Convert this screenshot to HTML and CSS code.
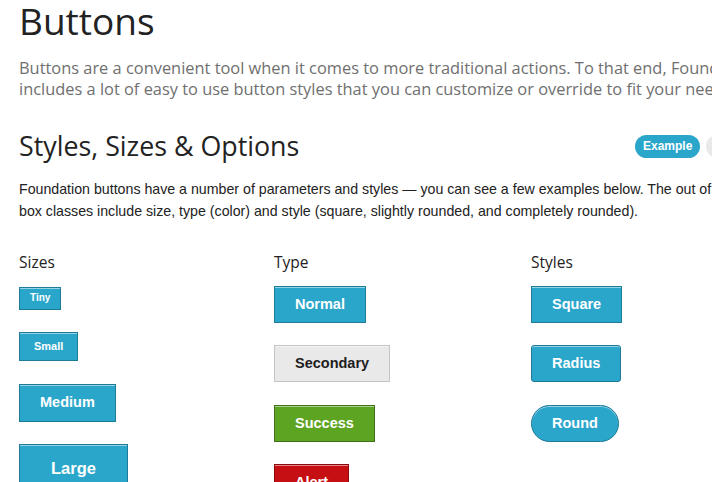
FILE: index.html
```html
<!DOCTYPE html>
<html lang="en">
<head>
<meta charset="utf-8">
<title>Buttons</title>
<link rel="stylesheet" href="styles.css">
</head>
<body>
<div class="page">
  <h1 class="title">Buttons</h1>
  <p class="lead">Buttons are a convenient tool when it comes to more traditional actions. To that end, Foundation<br>includes a lot of easy to use button styles that you can customize or override to fit your needs.</p>

  <div class="section-head">
    <h2 class="subtitle">Styles, Sizes &amp; Options</h2>
    <div class="labels">
      <span class="label label-blue">Example</span>
      <span class="label label-grey">Code</span>
    </div>
  </div>
  <p class="text">Foundation buttons have a number of parameters and styles — you can see a few examples below. The out of the<br>box classes include size, type (color) and style (square, slightly rounded, and completely rounded).</p>

  <div class="columns">
    <div class="col col-sizes">
      <h4 class="col-title">Sizes</h4>
      <a class="button tiny">Tiny</a>
      <a class="button small">Small</a>
      <a class="button medium">Medium</a>
      <a class="button large">Large</a>
    </div>
    <div class="col">
      <h4 class="col-title">Type</h4>
      <a class="button">Normal</a>
      <a class="button secondary">Secondary</a>
      <a class="button success">Success</a>
      <a class="button alert">Alert</a>
    </div>
    <div class="col">
      <h4 class="col-title">Styles</h4>
      <a class="button square">Square</a>
      <a class="button radius">Radius</a>
      <a class="button round">Round</a>
    </div>
  </div>
</div>
</body>
</html>
```

FILE: styles.css
```css
html, body {
  margin: 0;
  padding: 0;
  background: #fff;
  overflow: hidden;
}

.page {
  width: 900px;
  padding-left: 19px;
  color: #222;
}

.title {
  margin: 0;
  padding-top: 2px;
  font-family: "Open Sans", sans-serif;
  font-weight: 400;
  font-size: 37px;
  line-height: 38px;
  color: #222;
}

.lead {
  margin: 17px 0 0;
  font-family: "Open Sans", sans-serif;
  font-size: 16.4px;
  line-height: 21px;
  color: #6f6f6f;
  white-space: nowrap;
}

.section-head {
  display: grid;
  grid-template-columns: 616px auto;
  align-items: center;
  margin-top: 30px;
}

.subtitle {
  margin: 0;
  font-family: "Open Sans", sans-serif;
  font-weight: 400;
  font-size: 26.8px;
  line-height: 34px;
  color: #222;
}

.labels {
  display: flex;
  gap: 6px;
}

.label {
  display: inline-block;
  font-family: "Liberation Sans", Arial, sans-serif;
  font-weight: 700;
  font-size: 12px;
  line-height: 23px;
  height: 23px;
  padding: 0 8px;
  border-radius: 12px;
  color: #fff;
}

.label-blue { background: #2ba6cb; }
.label-grey { background: #e9e9e9; color: #333; }

.text {
  margin: 15px 0 0;
  font-family: "Liberation Sans", Arial, sans-serif;
  font-size: 14.2px;
  line-height: 22px;
  color: #222;
  white-space: nowrap;
}

.columns {
  display: grid;
  grid-template-columns: 255px 257px 255px;
  margin-top: 30px;
}

.col {
  display: flex;
  flex-direction: column;
  align-items: flex-start;
  gap: 22.5px;
}

.col-title {
  margin: 0 0 -9px;
  font-family: "Open Sans", sans-serif;
  font-weight: 400;
  font-size: 15.5px;
  line-height: 20px;
  color: #222;
}

.col-sizes .tiny { margin-top: 1px; }

.button {
  display: inline-block;
  box-sizing: border-box;
  font-family: "Liberation Sans", Arial, sans-serif;
  font-weight: 700;
  font-size: 14.5px;
  line-height: 14px;
  padding: 10px 20px 11px;
  background: #2ba6cb;
  border: 1px solid #1e7b98;
  color: #fff;
  box-shadow: inset 0 1px 0 rgba(255, 255, 255, 0.5);
  text-decoration: none;
  cursor: pointer;
}

.button.tiny {
  font-size: 10px;
  line-height: 10px;
  padding: 5px 10px 6px;
}

.button.small {
  font-size: 11px;
  line-height: 12px;
  padding: 7px 14px 8px;
}

.button.medium {
  line-height: 15px;
}

.button.large {
  font-size: 16.5px;
  line-height: 16px;
  padding: 15px 31px 16px;
}

.button.secondary {
  background: #e9e9e9;
  border-color: #c4c4c4;
  color: #1d1d1d;
}

.button.success {
  background: #5da423;
  border-color: #3f7018;
}

.button.alert {
  background: #c60f13;
  border-color: #8a0a0d;
}

.button.radius { border-radius: 3px; }
.button.round { border-radius: 1000px; }
```
